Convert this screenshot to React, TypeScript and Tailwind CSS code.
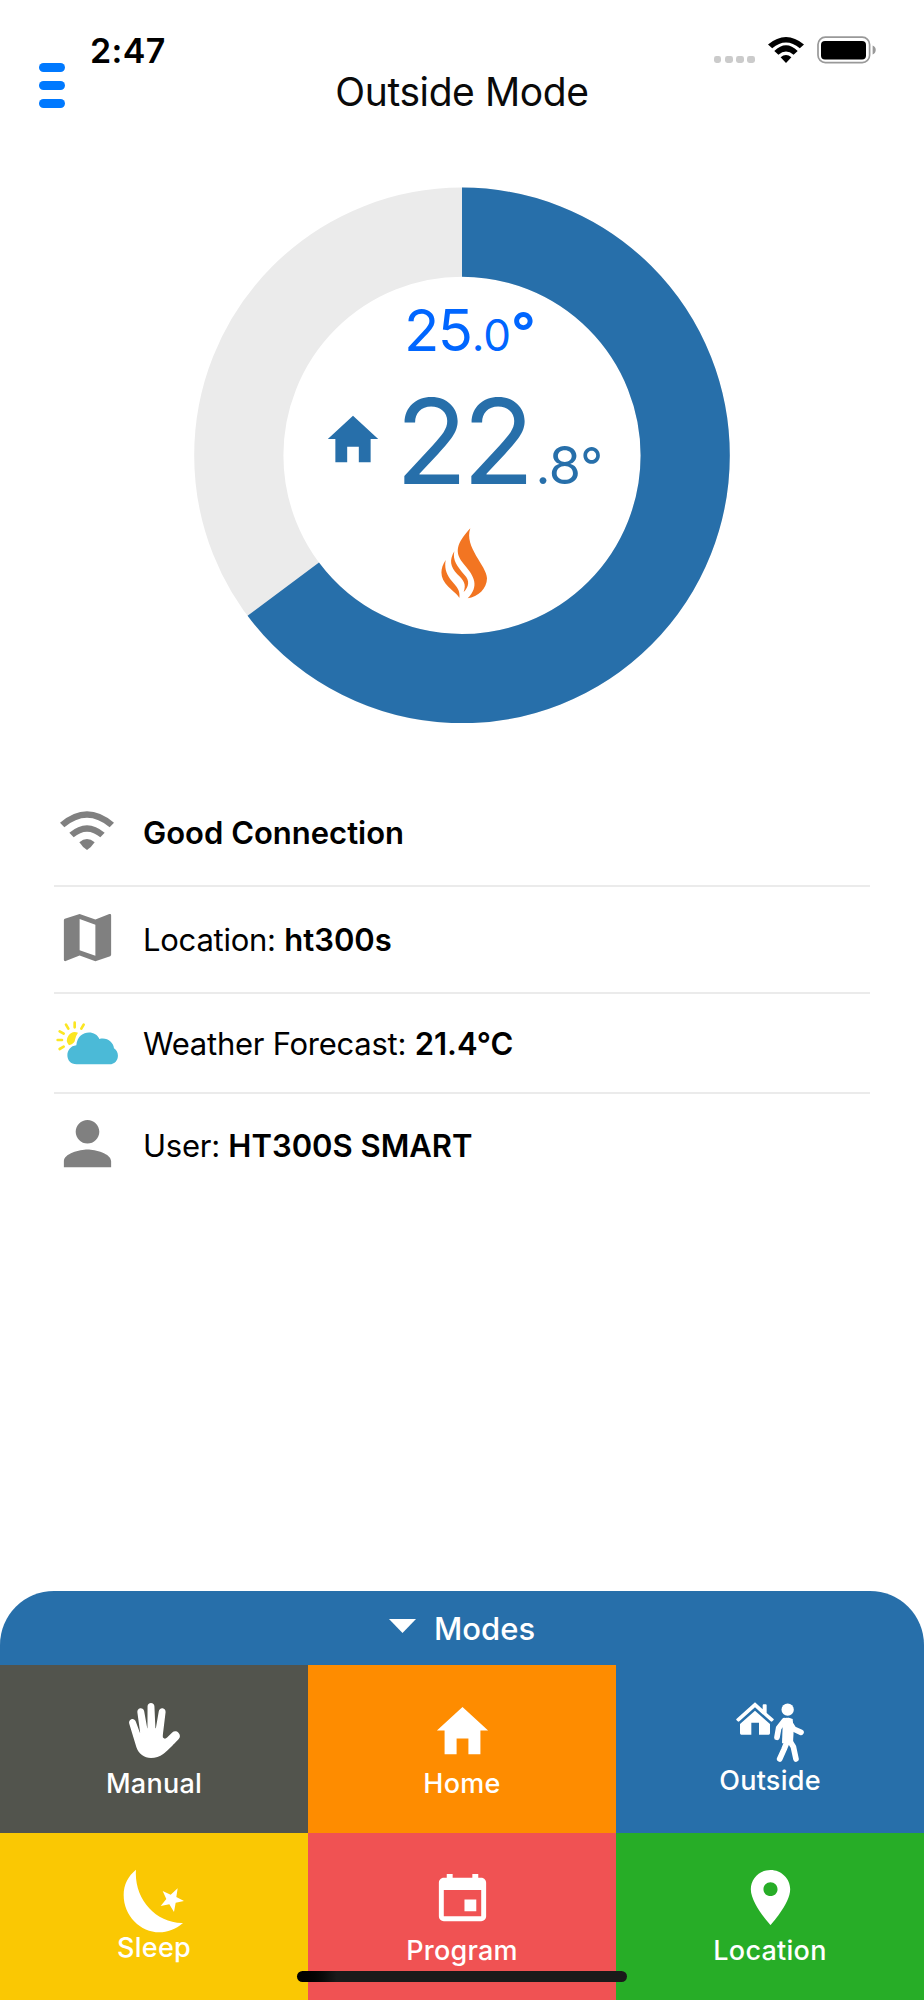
import type { ReactNode } from 'react';
import {
  IoMdCalendar,
  IoMdHand,
  IoMdHome,
  IoMdMap,
  IoMdPerson,
  IoMdPin,
} from 'react-icons/io';

function StatusBar() {
  return (
    <div className="flex justify-between h-[72px] pl-[90px] pr-[48px] pt-[30px]">
      <span className="text-[34px] leading-[42px] h-[42px] font-semibold tracking-[0.4px]">2:47</span>
      <div className="flex items-start pt-[6px]">
        <div className="flex gap-[3.4px] pt-[20px] mr-[13px]">
          <span className="w-[7.8px] h-[7.4px] rounded-[2.4px] bg-[#cbcbcb]" />
          <span className="w-[7.8px] h-[7.4px] rounded-[2.4px] bg-[#cbcbcb]" />
          <span className="w-[7.8px] h-[7.4px] rounded-[2.4px] bg-[#cbcbcb]" />
          <span className="w-[7.8px] h-[7.4px] rounded-[2.4px] bg-[#cbcbcb]" />
        </div>
        <svg className="w-[36px] h-[27px] mr-[13px]" viewBox="0 0 36 27">
          <path d="M0 8.4Q18-6.6 36 8.4L31.8 12.2Q18 .8 4.2 12.2Z" />
          <path d="M6.3 15Q18 3.6 29.7 15L25.6 18.8Q18 12 10.4 18.8Z" />
          <path d="M12.6 21.2Q18 16.6 23.4 21.2L18 27Z" />
        </svg>
        <svg className="w-[59px] h-[28px]" viewBox="0 0 59 28">
          <rect x="1" y="1.2" width="51.6" height="25.4" rx="7.4" fill="none" stroke="#999" strokeWidth="1.7" />
          <rect x="4" y="5" width="45" height="18.6" rx="4" />
          <path d="M55.6 9.6C59.8 11 59.8 17 55.6 18.4Z" fill="#999" />
        </svg>
      </div>
    </div>
  );
}

function Header() {
  return (
    <header className="grid grid-cols-[300px_1fr_300px] h-[48px]">
      <div className="flex flex-col gap-[8.6px] pl-[39px] -mt-[9px]">
        <span className="w-[26px] h-[9.2px] rounded-full bg-[#0079ff]" />
        <span className="w-[26px] h-[9.2px] rounded-full bg-[#0079ff]" />
        <span className="w-[26px] h-[9.2px] rounded-full bg-[#0079ff]" />
      </div>
      <h1 className="text-[39px] leading-[40px] text-center whitespace-nowrap tracking-[-0.4px] text-[#0a0a0a]">
        Outside Mode
      </h1>
    </header>
  );
}

function FlameIcon() {
  return (
    <svg className="w-[47px] h-[72px]" viewBox="0 0 141 216" fill="#f27522">
      <path d="M88 4C46 50 38 77 70 113C101 149 115 177 80 214C111 211 138 184 138 154C138 117 68 60 88 4Z" />
      <path d="M40 73C24 101 28 119 49 142C67 159 77 171 68 195C83 180 88 161 70 143C49 119 34 100 40 73Z" />
      <path d="M14 99C-5 128-3 155 22 179C38 194 50 203 55 213C57 196 53 185 38 169C19 148 9 129 14 99Z" />
    </svg>
  );
}

function Dial() {
  const radius = 223.2;
  const length = 2 * Math.PI * radius;
  const progress = 0.6475;

  return (
    <div className="relative w-[536px] h-[536px] mx-auto mt-[67px]">
      <svg className="w-full h-full" viewBox="0 0 536 536" fill="none" strokeWidth="89.2">
        <circle cx="268" cy="268.4" r={radius} stroke="#ebebeb" />
        <circle
          cx="268"
          cy="268.4"
          r={radius}
          stroke="#276faa"
          strokeDasharray={`${length * progress} ${length}`}
          transform="rotate(-90 268 268.4)"
        />
      </svg>
      <div className="absolute inset-0 flex flex-col pt-[114px]">
        <div className="flex items-baseline h-[58px] pl-[210px] leading-none text-[#0066ff]">
          <span className="text-[58px] leading-none tracking-[-1.5px]">25</span>
          <span className="text-[44px] leading-none">.0</span>
          <span className="text-[54px] leading-none font-semibold">°</span>
        </div>
        <div className="flex items-baseline h-[118px] mt-[23px] pl-[128px] text-[#276faa]">
          <IoMdHome className="size-[62px] shrink-0 self-start mt-[25.5px]" />
          <span className="text-[118px] leading-none ml-[11.5px] tracking-[-5px]">22</span>
          <span className="text-[52px] leading-none ml-[6px] tracking-[-0.6px]">
            .8<span className="text-[50px]">°</span>
          </span>
        </div>
        <div className="mt-[27px] ml-[247px]">
          <FlameIcon />
        </div>
      </div>
    </div>
  );
}

function WifiIcon() {
  return (
    <svg className="w-[54px] h-[39px] -mt-1 mr-[2px]" viewBox="0 0 162 117" fill="currentColor">
      <path d="M0 35Q81-34 162 35L149 49Q81-8 13 49Z" />
      <path d="M28 65Q81 20 134 65L121 79Q81 45 41 79Z" />
      <path d="M58 94Q81 74 104 94Q95 108 81 117Q67 108 58 94Z" />
    </svg>
  );
}

function WeatherIcon() {
  return (
    <svg className="w-[63px] h-[44px]" viewBox="0 0 189 132">
      <g stroke="#fbe622" strokeWidth="8" strokeLinecap="round">
        <path d="M56 5V19M30 11L37 23M83 11L76 23M11 31L23 38M5 57H18M11 84L23 77" />
      </g>
      <path d="M39 73A24 24 0 0 1 66 35Q60 43 57 56Q58 66 39 73Z" fill="#fbe622" />
      <path
        d="M62 130C24 130 26 76 61 73C65 26 119 25 130 54C154 48 172 64 174 82C194 95 188 130 160 130Z"
        fill="#4bbad7"
      />
    </svg>
  );
}

interface InfoRowProps {
  icon: ReactNode;
  label?: string;
  value: string;
  className: string;
}

function InfoRow({ icon, label, value, className }: InfoRowProps) {
  return (
    <li className={`flex items-center border-[#ebebeb] ${className}`}>
      <div className="w-[67px] flex justify-center text-[#808080] shrink-0">{icon}</div>
      <p className="ml-[22px] text-[31px] leading-none whitespace-nowrap text-black">
        {label && <span className="tracking-[-0.25px]">{label} </span>}
        <span className="font-semibold">{value}</span>
      </p>
    </li>
  );
}

function SleepIcon() {
  return (
    <svg className="w-[62px] h-[64px]" viewBox="0 0 186 192" fill="currentColor">
      <path d="M39 2C32 86 96 164 180 162C104 228 2 168 2 78C2 47 16 20 39 2Z" />
      <path d="M164 58L160 84L183 96L158 101L153 129L139 106L113 111L130 90L119 66L143 77Z" />
    </svg>
  );
}

function OutsideIcon() {
  return (
    <svg className="w-[68px] h-[60px]" viewBox="0 0 204 180" fill="currentColor">
      <path d="M57 1L80 22V10Q80 7 83 7H89Q92 7 92 10V33L112 50Q115 53 112 55L109 58Q107 60 104 58L57 16L10 58Q7 60 5 58L2 55Q-1 53 2 50Z" />
      <path d="M57 26L102 66V94Q102 98 98 98H69V62H46V98H16Q12 98 12 94V66Z" />
      <circle cx="155" cy="23" r="18.5" />
      <path
        d="M145 56L128 78L123 106M157 56L173 81L195 91M157 110L144 142L131 171M157 110L172 134L180 171"
        fill="none"
        stroke="currentColor"
        strokeWidth="17"
        strokeLinecap="round"
        strokeLinejoin="round"
      />
      <path d="M141 49Q155 45 170 51L173 85L171 124H138L139 96Z" />
    </svg>
  );
}

interface ModeButtonProps {
  icon: ReactNode;
  label: string;
  className: string;
}

function ModeButton({ icon, label, className }: ModeButtonProps) {
  return (
    <button className={`flex flex-col items-center text-white ${className}`}>
      {icon}
      <span className="text-[27px] leading-[30px] font-medium tracking-[0.25px]">{label}</span>
    </button>
  );
}

export default function App() {
  return (
    <div className="relative w-[924px] h-[2000px] overflow-hidden flex flex-col bg-white text-black font-['Inter',sans-serif]">
      <StatusBar />
      <Header />
      <Dial />

      <ul className="mt-[57px] pl-[54px] pr-[54px]">
        <InfoRow className="h-[107px] border-b-2" icon={<WifiIcon />} value="Good Connection" />
        <InfoRow
          className="h-[107px] border-b-2"
          icon={<IoMdMap className="size-[63px] -mt-1" />}
          label="Location:"
          value="ht300s"
        />
        <InfoRow
          className="h-[100px] border-b-2"
          icon={<WeatherIcon />}
          label="Weather Forecast:"
          value="21.4°C"
        />
        <InfoRow
          className="h-[103px]"
          icon={<IoMdPerson className="size-[63px] -mt-1" />}
          label="User:"
          value="HT300S SMART"
        />
      </ul>

      <section className="mt-auto h-[409px] rounded-t-[54px] overflow-hidden bg-[#276faa]">
        <div className="h-[74px] flex items-center pl-[389px] text-white">
          <svg className="w-[27px] h-[14px] -mt-[4px]" viewBox="0 0 27 14" fill="currentColor">
            <path d="M0 0H27L13.5 14Z" />
          </svg>
          <span className="ml-[18px] text-[31px] leading-none font-medium">Modes</span>
        </div>
        <div className="grid grid-cols-3 grid-rows-2 h-[335px]">
          <ModeButton
            className="bg-[#52544d] pt-[34px]"
            icon={<IoMdHand className="size-[63px] mb-[6.5px]" />}
            label="Manual"
          />
          <ModeButton
            className="bg-[#fe8c00] pt-[34px]"
            icon={<IoMdHome className="size-[63px] mb-[6.5px]" />}
            label="Home"
          />
          <ModeButton
            className="bg-[#276faa] pt-[37px]"
            icon={<span className="mb-[3.5px]"><OutsideIcon /></span>}
            label="Outside"
          />
          <ModeButton
            className="bg-[#fac803] pt-[36px]"
            icon={<SleepIcon />}
            label="Sleep"
          />
          <ModeButton
            className="bg-[#f05253] pt-[33.5px]"
            icon={<IoMdCalendar className="size-[63px] mb-[7px]" />}
            label="Program"
          />
          <ModeButton
            className="bg-[#27ad27] pt-[33.5px]"
            icon={<IoMdPin className="size-[63px] mb-[7px]" />}
            label="Location"
          />
        </div>
      </section>

      <div className="absolute left-[297px] top-[1971px] w-[330px] h-[11px] rounded-full bg-linear-to-r from-black from-0% via-[#1a1a1a] via-12% to-[#1a1a1a]" />
    </div>
  );
}
